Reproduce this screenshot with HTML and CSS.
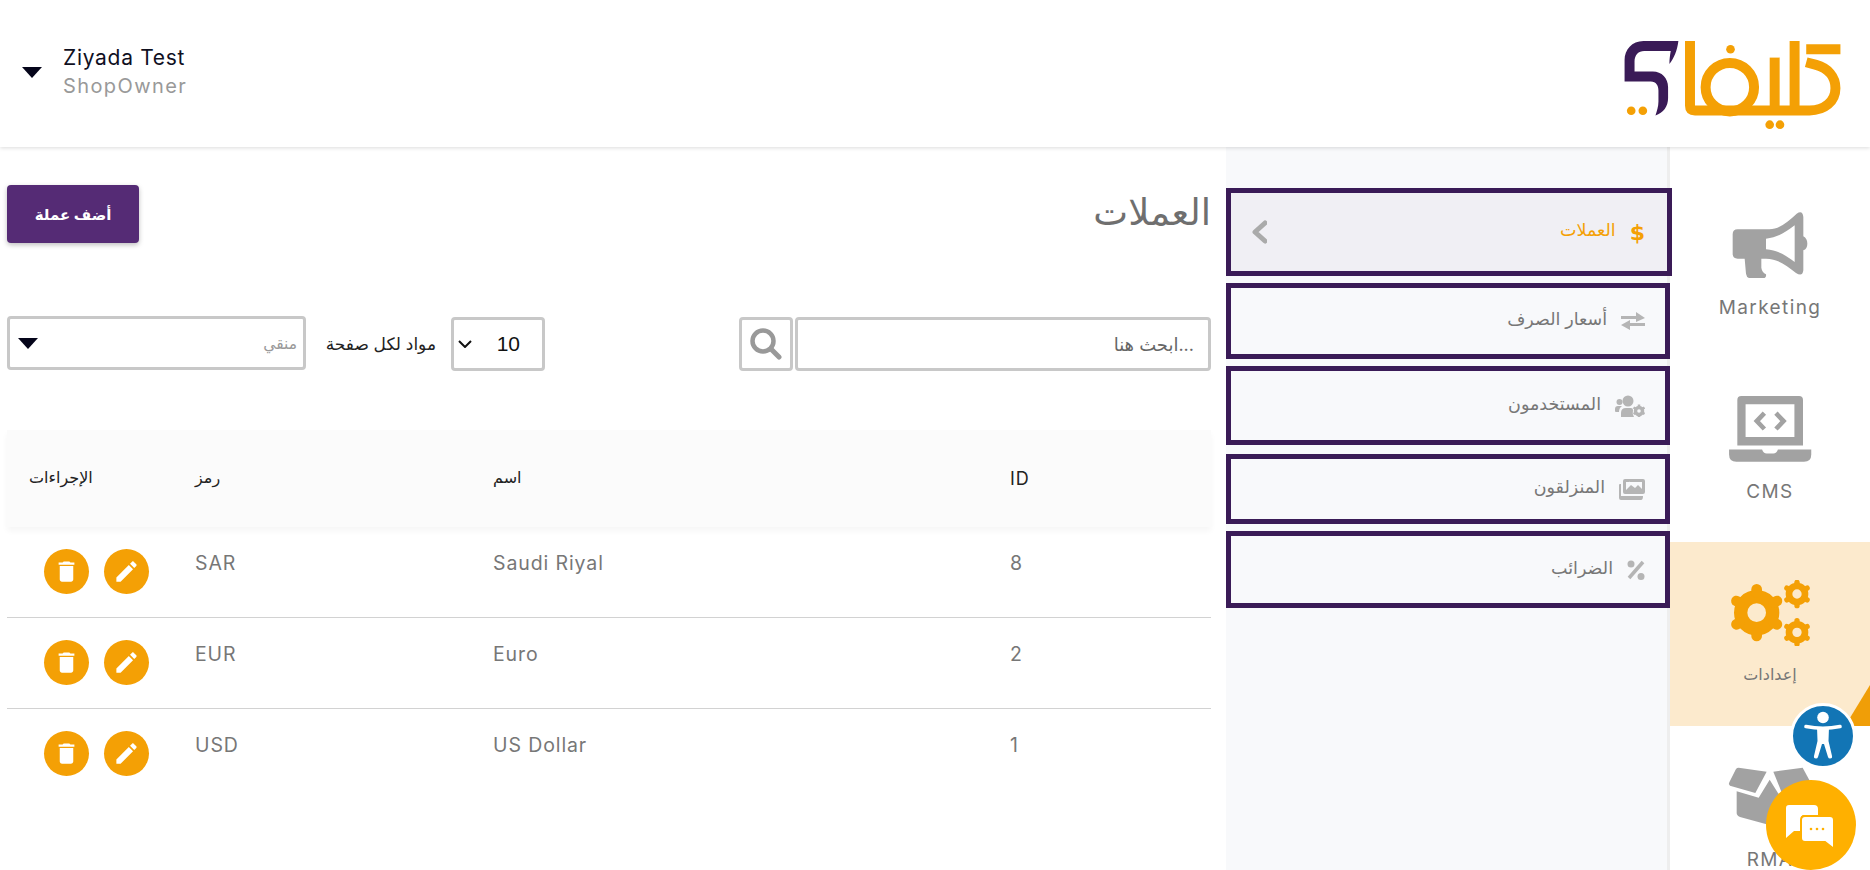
FILE: index.html
```html
<!DOCTYPE html>
<html lang="ar" dir="rtl">
<head>
    <meta charset="UTF-8">
    <title>العملات</title>
    <link rel="stylesheet" href="styles.css">
</head>
<body>
    <header class="topbar">
        <svg class="logo" viewBox="133 123 650 265" aria-label="Logo">
            <path fill="#3a1b57" d="M295 123 H190 C155 123 133 150 133 180 V245 H212 C228 245 235 258 235 272 V305 C235 320 230 335 226 347 C250 340 264 320 264 295 V262 C264 235 245 215 218 215 H163 V185 C163 165 175 153 192 153 H272 C270 165 268 178 268 192 C282 175 292 150 295 123 Z"/>
            <g fill="none" stroke="#f4a005" stroke-width="30">
                <path d="M330 123 V318 C330 328 335 332 345 332 H690 C735 332 768 305 768 265 C768 230 745 205 710 195 L680 187"/>
                <path d="M680 148 H783"/>
                <path d="M585 173 V332"/>
                <path d="M645 123 V332"/>
                <circle cx="450" cy="262" r="73"/>
            </g>
            <g fill="#f4a005">
                <circle cx="452" cy="148" r="13"/>
                <circle cx="570" cy="375" r="13"/>
                <circle cx="601" cy="375" r="13"/>
                <circle cx="153" cy="333" r="13"/>
                <circle cx="188" cy="333" r="13"/>
            </g>
        </svg>
        <div class="user">
            <span class="user-caret"></span>
            <div>
                <div class="user-name">Ziyada Test</div>
                <div class="user-role">ShopOwner</div>
            </div>
        </div>
    </header>

    <div class="layout">
        <nav class="rail">
            <a class="rail-item">
                <svg class="rail-icon" viewBox="170 185 264 198">
                    <path fill="#a2a2a2" fill-rule="evenodd" d="M205 237 H300 C330 237 355 215 382 190 Q400 178 402 200 V258 Q414 265 414 280 Q414 295 402 300 V360 Q400 380 380 368 C350 345 325 325 290 325 H276 V352 Q278 366 290 372 Q292 384 280 384 H245 Q232 384 230 370 L226 325 H205 Q190 325 190 310 V252 Q190 237 205 237 Z M290 265 V297 C325 300 350 315 376 335 V225 C350 245 325 262 290 265 Z"/>
                </svg>
                <span class="rail-label">Marketing</span>
            </a>
            <a class="rail-item">
                <svg class="rail-icon" viewBox="170 738 264 200">
                    <path fill="#a2a2a2" fill-rule="evenodd" d="M215 738 H390 Q402 738 402 750 V888 H203 V750 Q203 738 215 738 Z M228 763 V862 H376 V763 Z"/>
                    <path fill="#a2a2a2" d="M178 900 H278 Q282 912 292 912 H312 Q322 912 326 900 H427 V915 Q427 937 405 937 H200 Q178 937 178 915 Z"/>
                    <path fill="none" stroke="#a2a2a2" stroke-width="14" d="M285 790 L262 814 L285 838 M320 790 L343 814 L320 838"/>
                </svg>
                <span class="rail-label">CMS</span>
            </a>
            <a class="rail-item rail-item-active">
                <svg class="rail-icon" viewBox="170 150 264 198">
                    <defs>
                        <g id="gear">
                            <circle r="48" fill="none" stroke="#f4a005" stroke-width="40"/>
                            <g stroke="#f4a005" stroke-width="32" stroke-linecap="round">
                                <path d="M0 -60 V-70"/>
                                <path d="M0 -60 V-70" transform="rotate(60)"/>
                                <path d="M0 -60 V-70" transform="rotate(120)"/>
                                <path d="M0 -60 V-70" transform="rotate(180)"/>
                                <path d="M0 -60 V-70" transform="rotate(240)"/>
                                <path d="M0 -60 V-70" transform="rotate(300)"/>
                            </g>
                        </g>
                    </defs>
                    <use href="#gear" x="262" y="248"/>
                    <use href="#gear" transform="translate(383 192) scale(.5)"/>
                    <use href="#gear" transform="translate(383 307) scale(.5)"/>
                </svg>
                <span class="rail-label">إعدادات</span>
                <span class="rail-corner"></span>
            </a>
            <a class="rail-item">
                <svg class="rail-icon" viewBox="170 714 264 176">
                    <path fill="#a2a2a2" d="M208 714 L292 726 L258 790 L182 768 Q176 764 180 758 L200 718 Q203 714 208 714 Z"/>
                    <path fill="#a2a2a2" d="M312 726 L400 714 L430 770 L340 796 Z"/>
                    <path fill="#a2a2a2" d="M202 785 L268 804 L301 750 L336 806 L420 782 V850 L300 886 L212 862 Q202 858 202 850 Z"/>
                </svg>
                <span class="rail-label">RMA</span>
            </a>
        </nav>

        <aside class="submenu">
            <a class="sub-item sub-item-active">
                <span class="sub-dollar">$</span>
                <span class="sub-text">العملات</span>
                <svg class="sub-chevron" viewBox="0 0 16 24"><path fill="none" stroke="#aaaaaa" stroke-width="5" stroke-linecap="round" stroke-linejoin="round" d="M14 3 L4 12 L14 21"/></svg>
            </a>
            <a class="sub-item sub-item-rates">
                <svg class="sub-icon" viewBox="0 0 24 18"><path fill="#b5b5b5" d="M0 4 H15 V0 L24 6 L15 10 V7 H0 Z M24 11 H9 V8 L0 13 L9 18 V14 H24 Z"/></svg>
                <span class="sub-text">أسعار الصرف</span>
            </a>
            <a class="sub-item sub-item-users">
                <svg class="sub-icon sub-icon-wide" viewBox="0 0 30 22">
                    <circle cx="4.500" cy="7" r="3" fill="#b5b5b5"/>
                    <circle cx="13" cy="6" r="5.500" fill="#b5b5b5"/>
                    <path fill="#b5b5b5" d="M0 14 Q0 11 3 11 H7 Q4 13 4 17 H1 Q0 17 0 16 Z M6 22 V18 Q6 13 11 13 H16 Q18 13 18 15 Q17 19 19 22 Z"/>
                    <circle cx="24" cy="16" r="3.500" fill="none" stroke="#b5b5b5" stroke-width="3.500"/>
                    <path stroke="#b5b5b5" stroke-width="2.500" d="M24 9.500 V22 M18.500 12.500 L29.500 19 M29.500 12.500 L18.500 19"/>
                    <circle cx="24" cy="16" r="1.800" fill="#f8f9fb"/>
                </svg>
                <span class="sub-text">المستخدمون</span>
            </a>
            <a class="sub-item sub-item-sliders">
                <svg class="sub-icon sub-icon-images" viewBox="0 0 26 21">
                    <path fill="#b5b5b5" fill-rule="evenodd" d="M6 0 H24 Q26 0 26 2 V13 Q26 15 24 15 H6 Q4 15 4 13 V2 Q4 0 6 0 Z M7 3 V11 L12 6 L16 9 L19 6 L23 10 V3 Z"/>
                    <circle cx="10.500" cy="4.500" r="1.800" fill="#f8f9fb"/>
                    <path fill="#b5b5b5" d="M0 6 Q0 5 1 5 H2 V17 H24 Q24 21 22 21 H2 Q0 21 0 19 Z"/>
                </svg>
                <span class="sub-text">المنزلقون</span>
            </a>
            <a class="sub-item sub-item-taxes">
                <svg class="sub-icon sub-icon-percent" viewBox="0 0 18 20">
                    <circle cx="4" cy="4" r="3.500" fill="#b5b5b5"/>
                    <circle cx="14" cy="16.500" r="3.500" fill="#b5b5b5"/>
                    <path stroke="#b5b5b5" stroke-width="3.500" d="M16 2 L2 18"/>
                </svg>
                <span class="sub-text">الضرائب</span>
            </a>
        </aside>

        <main class="content">
            <div class="title-row">
                <h1>العملات</h1>
                <button class="add-button" type="button">أضف عملة</button>
            </div>

            <div class="controls">
                <div class="search">
                    <input class="search-input" type="text" placeholder="...ابحث هنا">
                    <button class="search-button" type="button">
                        <svg viewBox="0 0 32 32" width="32" height="32"><circle cx="13" cy="13" r="10.500" fill="none" stroke="#999999" stroke-width="4.500"/><path stroke="#999999" stroke-width="5" stroke-linecap="round" d="M21 21 L29 29"/></svg>
                    </button>
                </div>
                <div class="paging">
                    <div class="per-page">
                        <span>10</span>
                        <svg viewBox="0 0 14 8" width="14" height="8"><path fill="none" stroke="#111111" stroke-width="2" d="M1 1 L7 7 L13 1"/></svg>
                    </div>
                    <label class="paging-label">مواد لكل صفحة</label>
                    <div class="filter">
                        <span class="filter-text">منقي</span>
                        <span class="filter-caret"></span>
                    </div>
                </div>
            </div>

            <table class="currencies">
                <thead>
                    <tr>
                        <th class="col-id">ID</th>
                        <th class="col-name">اسم</th>
                        <th class="col-code">رمز</th>
                        <th class="col-actions">الإجراءات</th>
                    </tr>
                </thead>
                <tbody>
                    <tr>
                        <td>8</td>
                        <td>Saudi Riyal</td>
                        <td>SAR</td>
                        <td class="cell-actions">
                            <div class="actions">
                                <button class="round-button" type="button"><svg viewBox="0 0 24 24"><path d="M6 19c0 1.100.9 2 2 2h8c1.100 0 2-.9 2-2V7H6v12zM19 4h-3.500l-1-1h-5l-1 1H5v2h14V4z"/></svg></button>
                                <button class="round-button" type="button"><svg viewBox="0 0 24 24"><path d="M3 17.25V21h3.750L17.810 9.940l-3.750-3.750L3 17.250zM20.710 7.040c.39-.39.39-1.020 0-1.410l-2.340-2.340c-.39-.39-1.020-.39-1.410 0l-1.830 1.830 3.750 3.750 1.830-1.830z"/></svg></button>
                            </div>
                        </td>
                    </tr>
                    <tr>
                        <td>2</td>
                        <td>Euro</td>
                        <td>EUR</td>
                        <td class="cell-actions">
                            <div class="actions">
                                <button class="round-button" type="button"><svg viewBox="0 0 24 24"><path d="M6 19c0 1.100.9 2 2 2h8c1.100 0 2-.9 2-2V7H6v12zM19 4h-3.500l-1-1h-5l-1 1H5v2h14V4z"/></svg></button>
                                <button class="round-button" type="button"><svg viewBox="0 0 24 24"><path d="M3 17.25V21h3.750L17.810 9.940l-3.750-3.750L3 17.250zM20.710 7.040c.39-.39.39-1.020 0-1.410l-2.340-2.340c-.39-.39-1.020-.39-1.410 0l-1.830 1.830 3.750 3.750 1.830-1.830z"/></svg></button>
                            </div>
                        </td>
                    </tr>
                    <tr>
                        <td>1</td>
                        <td>US Dollar</td>
                        <td>USD</td>
                        <td class="cell-actions">
                            <div class="actions">
                                <button class="round-button" type="button"><svg viewBox="0 0 24 24"><path d="M6 19c0 1.100.9 2 2 2h8c1.100 0 2-.9 2-2V7H6v12zM19 4h-3.500l-1-1h-5l-1 1H5v2h14V4z"/></svg></button>
                                <button class="round-button" type="button"><svg viewBox="0 0 24 24"><path d="M3 17.25V21h3.750L17.810 9.940l-3.750-3.750L3 17.250zM20.710 7.040c.39-.39.39-1.020 0-1.410l-2.340-2.340c-.39-.39-1.020-.39-1.410 0l-1.830 1.830 3.750 3.750 1.830-1.830z"/></svg></button>
                            </div>
                        </td>
                    </tr>
                </tbody>
            </table>
        </main>
    </div>

    <button class="a11y-button" type="button" aria-label="Accessibility">
        <svg viewBox="0 0 60 60" width="60" height="60">
            <circle cx="30" cy="11.500" r="5.800" fill="#ffffff"/>
            <path fill="none" stroke="#ffffff" stroke-width="3.600" stroke-linecap="round" d="M13 20.500 Q30 24 47 20.500"/>
            <path fill="#ffffff" d="M24 21 H36 L35.500 35 L39 50 Q39.500 52.500 37 52.500 Q35.500 52.500 35 51 L31 38 H29 L25 51 Q24.500 52.500 23 52.500 Q20.500 52.500 21 50 L24.500 35 Z"/>
        </svg>
    </button>

    <button class="chat-button" type="button" aria-label="Chat">
        <svg viewBox="0 0 50 46" width="50" height="46">
            <path fill="#ffffff" d="M3 0 H28 Q32 0 32 4 V10 H18 Q15 10 15 14 V26 H8 L0 33 V3 Q0 0 3 0 Z"/>
            <path fill="#ffffff" stroke="#ffb000" stroke-width="2" d="M19 11 H44 Q48 11 48 15 V44 L39 37 H19 Q15 37 15 33 V15 Q15 11 19 11 Z"/>
            <g fill="#ffb000"><circle cx="25" cy="24" r="1.300"/><circle cx="31" cy="24" r="1.300"/><circle cx="37" cy="24" r="1.300"/></g>
        </svg>
    </button>
</body>
</html>
```

FILE: styles.css
```css
html, body {
    margin: 0;
    height: 870px;
    overflow: hidden;
}
body {
    font-family: Inter, "Liberation Sans", "DejaVu Sans", sans-serif;
    background-color: #fff;
    color: #777;
}
.topbar {
    height: 147px;
    display: flex;
    justify-content: space-between;
    align-items: flex-start;
    padding: 0 29px 0 22px;
    background-color: #fff;
    box-shadow: 0 1px 4px rgba(0, 0, 0, 0.14);
    position: relative;
    box-sizing: border-box;
}
.logo {
    width: 217px;
    height: 88px;
    margin-top: 41px;
}
.user {
    direction: ltr;
    display: flex;
    align-items: center;
    gap: 21px;
    margin-top: 44px;
}
.user-caret {
    width: 0;
    height: 0;
    border-left: 10px solid transparent;
    border-right: 10px solid transparent;
    border-top: 11px solid #05051a;
}
.user-name {
    font-size: 21px;
    line-height: 28px;
    letter-spacing: 0.7px;
    color: #10101f;
}
.user-role {
    font-size: 20px;
    line-height: 28px;
    letter-spacing: 1.4px;
    color: #999;
}
.layout {
    display: flex;
    height: 723px;
}
.rail {
    width: 200px;
    padding-top: 27px;
    flex-shrink: 0;
    box-sizing: border-box;
}
.rail-item {
    height: 184px;
    padding-top: 38px;
    box-sizing: border-box;
    display: flex;
    flex-direction: column;
    align-items: center;
    position: relative;
}
.rail-item-active {
    background-color: #fceacd;
}
.rail-icon {
    width: 88px;
    height: 66px;
}
.rail-label {
    margin-top: 19px;
    font-size: 19px;
    line-height: 22px;
    letter-spacing: 1.4px;
    color: #777;
}
.rail-item-active .rail-label {
    margin-top: 17px;
    font-size: 16px;
    letter-spacing: 0;
}
.rail-corner {
    position: absolute;
    right: 0;
    bottom: 0;
    border-bottom: 41px solid #f09e07;
    border-left: 25px solid transparent;
}
.submenu {
    width: 444px;
    flex-shrink: 0;
    padding-top: 41px;
    background-color: #f8f9fb;
    border-right: 3px solid #eeeeee;
    box-sizing: border-box;
}
.sub-item {
    display: flex;
    align-items: center;
    gap: 14px;
    padding: 0 20px;
    margin-right: -3px;
    border: 5px solid #3a1b57;
    box-sizing: border-box;
    height: 76px;
    margin-bottom: 7px;
    font-size: 17.500px;
}
.sub-item-active {
    height: 88px;
    background-color: #f0eff4;
    margin-right: -5px;
    padding-right: 22px;
    position: relative;
}
.sub-item-users {
    height: 79px;
    margin-bottom: 9px;
}
.sub-item-sliders {
    height: 70px;
}
.sub-item-taxes {
    height: 77px;
}
.sub-dollar {
    font-family: "DejaVu Sans", sans-serif;
    font-weight: bold;
    font-size: 22px;
    color: #f4a005;
}
.sub-item-active .sub-text {
    color: #f4a005;
}
.sub-chevron {
    width: 16px;
    height: 24px;
    margin-right: auto;
}
.sub-icon {
    width: 24px;
    height: 18px;
}
.sub-icon-wide {
    width: 30px;
    height: 22px;
}
.sub-icon-images {
    width: 26px;
    height: 21px;
}
.sub-icon-percent {
    width: 18px;
    height: 20px;
}
.sub-text {
    color: #777;
    margin-bottom: 5px;
}
.content {
    flex: 1;
    padding: 38px 15px 0 7px;
    box-sizing: border-box;
    min-width: 0;
}
.title-row {
    display: flex;
    justify-content: space-between;
    align-items: flex-start;
    height: 58px;
    margin-bottom: 74px;
}
h1 {
    margin: 0;
    font-size: 37px;
    font-weight: normal;
    line-height: 54px;
    color: #6f6f6f;
}
.add-button {
    width: 132px;
    height: 58px;
    background-color: #552b75;
    color: #fff;
    border: none;
    border-radius: 4px;
    font-family: inherit;
    font-size: 15px;
    font-weight: bold;
    box-shadow: 0 2px 5px rgba(0, 0, 0, 0.25);
}
.controls {
    display: flex;
    justify-content: space-between;
    align-items: center;
    height: 54px;
    margin-bottom: 59px;
}
.search {
    display: flex;
    gap: 2px;
}
.search-input {
    width: 416px;
    height: 54px;
    border: 3px solid #c8c8c8;
    border-radius: 4px;
    box-sizing: border-box;
    padding: 0 14px;
    font-family: inherit;
    font-size: 18px;
    outline: none;
}
.search-input::placeholder {
    color: #666;
}
.search-button {
    width: 54px;
    height: 54px;
    padding: 0;
    border: 3px solid #c8c8c8;
    border-radius: 4px;
    background-color: #fff;
    display: flex;
    align-items: center;
    justify-content: center;
}
.paging {
    display: flex;
    align-items: center;
}
.per-page {
    width: 94px;
    height: 54px;
    display: flex;
    align-items: center;
    justify-content: space-between;
    padding: 0 22px 0 4px;
    border: 3px solid #c8c8c8;
    border-radius: 4px;
    box-sizing: border-box;
    font-family: "Liberation Sans", sans-serif;
    font-size: 21px;
    color: #111;
    margin-left: 15px;
}
.paging-label {
    font-size: 17px;
    color: #222;
    width: 109px;
    white-space: nowrap;
    margin-left: 21px;
}
.filter {
    width: 299px;
    height: 54px;
    margin-bottom: 2px;
    display: flex;
    align-items: center;
    justify-content: space-between;
    padding: 0 6px 0 8px;
    border: 3px solid #c8c8c8;
    border-radius: 4px;
    box-sizing: border-box;
    font-size: 15.500px;
    color: #999;
}
.filter-caret {
    border-left: 10px solid transparent;
    border-right: 10px solid transparent;
    border-top: 11px solid #05051a;
}
.currencies {
    width: 1204px;
    border-collapse: collapse;
    table-layout: fixed;
    text-align: left;
}
.currencies thead tr {
    background-color: #fbfbfb;
    box-shadow: 0 4px 6px rgba(0, 0, 0, 0.04);
}
.currencies th {
    height: 97px;
    padding: 0 0 4px 22px;
    box-sizing: border-box;
    font-weight: normal;
    font-size: 16px;
    color: #222;
    text-align: left;
}
.currencies th.col-id {
    direction: ltr;
    padding-bottom: 0;
    font-size: 18px;
    letter-spacing: 1px;
}
.col-id { width: 223px; }
.col-name { width: 517px; }
.col-code { width: 298px; }
.col-actions { width: 166px; }
.currencies td {
    padding: 22px 0 23px 22px;
    vertical-align: top;
    border-bottom: 1px solid #d2d2d2;
    font-size: 19.500px;
    line-height: 29px;
    letter-spacing: 0.9px;
    color: #777;
    direction: ltr;
}
.currencies tr:last-child td {
    border-bottom: none;
}
.currencies td.cell-actions {
    padding-left: 37px;
}
.actions {
    display: flex;
    gap: 15px;
}
.round-button {
    width: 45px;
    height: 45px;
    padding: 0;
    border: none;
    border-radius: 50%;
    background-color: #f4a005;
    display: flex;
    align-items: center;
    justify-content: center;
}
.round-button svg {
    width: 27px;
    height: 27px;
    fill: #fff;
}
.a11y-button {
    position: absolute;
    left: 1790px;
    top: 703px;
    width: 66px;
    height: 66px;
    padding: 0;
    border: 3px solid #fff;
    border-radius: 50%;
    background-color: #1275b5;
    display: flex;
    align-items: center;
    justify-content: center;
}
.chat-button {
    position: absolute;
    left: 1766px;
    top: 780px;
    width: 90px;
    height: 90px;
    padding: 6px 0 0;
    border: none;
    border-radius: 50%;
    background-color: #ffb000;
    display: flex;
    align-items: center;
    justify-content: center;
}
```
